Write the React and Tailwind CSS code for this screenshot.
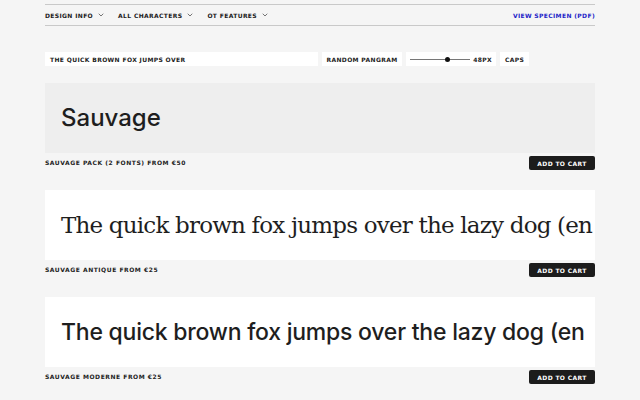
import { ChevronDown } from 'lucide-react';

const label = "font-['DejaVu_Sans',sans-serif] font-bold uppercase text-[6px] tracking-[0.06em]";

const NavItem = ({ children }) => (
  <div className="flex items-center gap-[4px] text-[#1a1a1a]">
    <span>{children}</span>
    <ChevronDown size={8} strokeWidth={2} className="text-[#333]" />
  </div>
);

const FontCard = ({ sample, sampleClass, bg, name }) => (
  <section className="flex flex-col">
    <div className={`h-[70px] ${bg} flex items-center pl-4 overflow-hidden whitespace-nowrap`}>
      <span className={sampleClass}>{sample}</span>
    </div>
    <div className="flex items-start justify-between pt-[3px] h-[37px]">
      <span className={`${label} text-[6.5px] tracking-[0.09em] text-[#222] mt-[2px]`}>{name}</span>
      <button className={`${label} bg-[#1c1c1c] text-white rounded-[2px] w-[66px] h-[14px] flex items-center justify-center`}>
        Add to cart
      </button>
    </div>
  </section>
);

export default function App() {
  return (
    <div className="min-h-[400px] bg-[#f5f5f5] pt-[4px]">
      <div className="mx-[45px] w-[550px]">
        <nav className={`${label} text-[5.3px] tracking-[0.04em] flex items-center justify-between h-[22px] border-y border-[#c9c9c9]`}>
          <div className="flex items-center gap-[13px]">
            <NavItem>Design info</NavItem>
            <NavItem>All characters</NavItem>
            <NavItem>OT features</NavItem>
          </div>
          <a className="text-[#2323c8]">View specimen (PDF)</a>
        </nav>

        <div className={`${label} tracking-[0.04em] flex items-center gap-[4px] mt-[26px] h-[14px] text-[#222]`}>
          <div className="w-[273px] h-full bg-white flex items-center pl-[5px]">The quick brown fox jumps over</div>
          <div className="w-[80px] h-full bg-white flex items-center justify-center">Random pangram</div>
          <div className="w-[90px] h-full bg-white flex items-center px-[4px] gap-[3px]">
            <div className="relative flex-1 h-px bg-[#777]">
              <div className="absolute left-[35px] top-[-2px] w-[5px] h-[5px] rounded-full bg-[#111]" />
            </div>
            <span>48px</span>
          </div>
          <div className="w-[29px] h-full bg-white flex items-center justify-center">Caps</div>
        </div>

        <div className="mt-[17px] flex flex-col">
          <FontCard
            bg="bg-[#eeeeee]"
            sample="Sauvage"
            sampleClass="font-['Inter',sans-serif] font-medium text-[24px] text-[#1e1e1e]"
            name="Sauvage Pack (2 fonts) from €50"
          />
          <FontCard
            bg="bg-white"
            sample="The quick brown fox jumps over the lazy dog (en"
            sampleClass="font-['DejaVu_Serif',serif] text-[23px] text-[#1e1e1e] tracking-[-0.035em]"
            name="Sauvage Antique from €25"
          />
          <FontCard
            bg="bg-white"
            sample="The quick brown fox jumps over the lazy dog (en"
            sampleClass="font-['Inter',sans-serif] font-medium text-[23px] text-[#1e1e1e] tracking-[-0.01em]"
            name="Sauvage Moderne from €25"
          />
        </div>
      </div>
    </div>
  );
}
